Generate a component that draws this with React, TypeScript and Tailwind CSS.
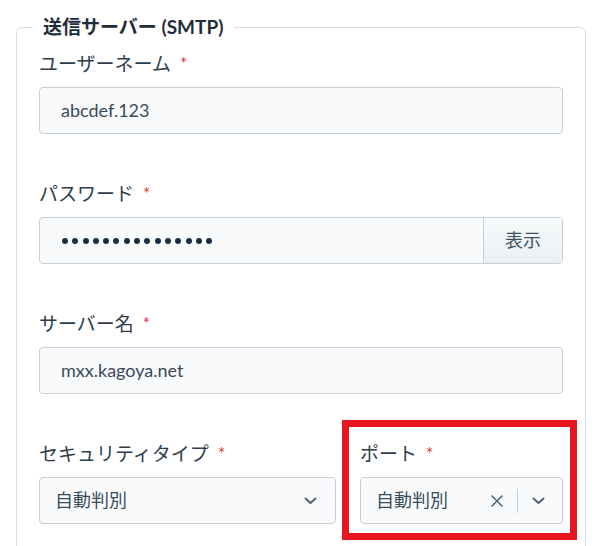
import React from "react";

const font = "font-['Lato','Noto_Sans_CJK_JP',sans-serif]";

type LabelProps = {
  text: string;
};

const FieldLabel = ({ text }: LabelProps) => (
  <div className="flex items-center text-[19px] leading-[27px] text-[#2e3d4d] mb-[10px]">
    <span>{text}</span>
    <span className="ml-[9px] text-[17px] text-[#e0343a]">*</span>
  </div>
);

const Chevron = () => (
  <svg width="13" height="8" viewBox="0 0 13 8" className="text-[#4f6479]">
    <path d="M1.5 1.5 L6.5 6 L11.5 1.5" fill="none" stroke="currentColor" strokeWidth="2" strokeLinecap="round" strokeLinejoin="round" />
  </svg>
);

const Cross = () => (
  <svg width="12" height="12" viewBox="0 0 12 12" className="text-[#52667a]">
    <path d="M1 1 L11 11 M11 1 L1 11" fill="none" stroke="currentColor" strokeWidth="1.6" strokeLinecap="round" />
  </svg>
);

const boxClass =
  "h-[47px] rounded-[4px] border border-[#c5d0da] bg-[#f8fafb] text-[18px] text-[#3a4a5b]";

const App = () => {
  return (
    <div className={`h-[546px] w-[601px] overflow-hidden bg-white pt-[13px] ${font}`}>
      <fieldset className="ml-4 w-[570px] rounded-[6px] border border-[#d6dee6] px-[22px] pb-10">
        <legend className="-ml-[7px] px-[11px] text-[19px] font-bold leading-[28px] text-[#1f2d3b]">
          送信サーバー (SMTP)
        </legend>

        {/* ユーザーネーム */}
        <div className="mt-[9px]">
          <FieldLabel text="ユーザーネーム" />
          <div className={`${boxClass} flex items-center pl-[21px]`}>abcdef.123</div>
        </div>

        {/* パスワード */}
        <div className="mt-[46px]">
          <FieldLabel text="パスワード" />
          <div className={`${boxClass} flex overflow-hidden`}>
            <div className="flex flex-1 items-center gap-[4.3px] pl-[22px]">
              {Array.from({ length: 15 }).map((_, i) => (
                <span key={i} className="h-[6px] w-[6px] rounded-full bg-[#1b2f44]" />
              ))}
            </div>
            <div className="flex w-[79px] items-center justify-center border-l border-[#c5d0da] bg-gradient-to-b from-[#f8fafb] to-[#ebf0f3] text-[#3f5264]">
              表示
            </div>
          </div>
        </div>

        {/* サーバー名 */}
        <div className="mt-[46px]">
          <FieldLabel text="サーバー名" />
          <div className={`${boxClass} flex items-center pl-[21px]`}>mxx.kagoya.net</div>
        </div>

        {/* セキュリティタイプ / ポート */}
        <div className="mt-[46px] grid grid-cols-[297px_1fr] gap-6">
          <div>
            <FieldLabel text="セキュリティタイプ" />
            <div className={`${boxClass} flex items-center justify-between pl-[15px] pr-[18px]`}>
              <span>自動判別</span>
              <Chevron />
            </div>
          </div>
          <div className="relative">
            <FieldLabel text="ポート" />
            <div className={`${boxClass} flex items-center pl-[15px] pr-[17px]`}>
              <span className="flex-1">自動判別</span>
              <Cross />
              <span className="mx-[14px] h-[24px] w-px bg-[#c5d0da]" />
              <Chevron />
            </div>
            {/* annotation frame */}
            <div className="pointer-events-none absolute -left-[18px] -right-[14px] -top-[20px] -bottom-[16px] border-[7px] border-[#e8141e]" />
          </div>
        </div>
      </fieldset>
    </div>
  );
};

export default App;
